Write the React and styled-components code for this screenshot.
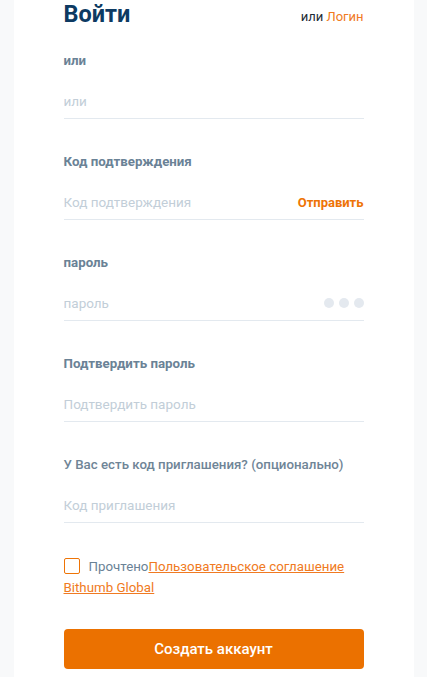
import React from "react";
import styled, { createGlobalStyle } from "styled-components";

const GlobalStyle = createGlobalStyle`
  html, body {
    margin: 0;
    padding: 0;
    background: #f8f9fa;
    font-family: Roboto, "Noto Sans", sans-serif;
  }
`;

const Page = styled.div`
  display: flex;
  justify-content: center;
  height: 677px;
  overflow: hidden;
`;

const Card = styled.div`
  width: 300px;
  padding: 0 50px 8px;
  background: #fff;
  display: flex;
  flex-direction: column;
`;

const Header = styled.div`
  display: flex;
  justify-content: space-between;
  align-items: flex-end;
  height: 28px;
`;

const Title = styled.h1`
  margin: 0;
  font-size: 23.5px;
  line-height: 28px;
  font-weight: 700;
  color: #0d3a62;
`;

const Switch = styled.div`
  font-size: 13px;
  line-height: 18px;
  color: #1d2b36;
  margin-bottom: 2px;
`;

const Orange = styled.span`
  color: #f07a22;
`;

const Field = styled.div`
  display: flex;
  flex-direction: column;
  margin-top: ${p => (p.first ? "23px" : "33px")};
`;

const Label = styled.div`
  font-size: 13.3px;
  line-height: 20px;
  font-weight: ${p => (p.light ? 500 : 700)};
  color: ${p => (p.light ? "#6f8597" : "#6a8296")};
`;

const InputRow = styled.div`
  display: flex;
  align-items: center;
  justify-content: space-between;
  padding: 20px 0 7px;
  border-bottom: 1px solid #e3e9ef;
`;

const Input = styled.input`
  flex: 1;
  min-width: 0;
  border: none;
  outline: none;
  padding: 0;
  height: 20px;
  font-family: inherit;
  font-size: 13.5px;
  color: #333;
  background: transparent;
  &::placeholder {
    color: #c2ced8;
  }
`;

const SendButton = styled.span`
  font-size: 13px;
  font-weight: 700;
  color: #ee7406;
`;

const Dots = styled.div`
  display: flex;
  gap: 5px;
`;

const Dot = styled.span`
  width: 10px;
  height: 10px;
  border-radius: 50%;
  background: #e4e9ef;
`;

const Agreement = styled.p`
  margin: 33px 0 0;
  font-size: 13.3px;
  line-height: 21px;
  color: #6a8296;
`;

const Box = styled.span`
  display: inline-block;
  box-sizing: border-box;
  width: 16px;
  height: 16px;
  border: 1.5px solid #ee7406;
  border-radius: 2px;
  vertical-align: -3px;
  margin-right: 9px;
`;

const Link = styled.a`
  color: #f07a22;
  text-decoration: underline;
`;

const Submit = styled.button`
  margin-top: 31px;
  height: 40px;
  border: none;
  border-radius: 4px;
  background: #eb7100;
  color: #fff;
  font-family: inherit;
  font-size: 15px;
  font-weight: 500;
`;

const fields = [
  { label: "или", placeholder: "или" },
  { label: "Код подтверждения", placeholder: "Код подтверждения", send: true },
  { label: "пароль", placeholder: "пароль", dots: true },
  { label: "Подтвердить пароль", placeholder: "Подтвердить пароль" },
  { label: "У Вас есть код приглашения? (опционально)", placeholder: "Код приглашения", light: true }
];

export default function App() {
  return (
    <Page>
      <GlobalStyle />
      <Card>
        <Header>
          <Title>Войти</Title>
          <Switch>или <Orange>Логин</Orange></Switch>
        </Header>
        {fields.map((f, i) => (
          <Field key={i} first={i === 0}>
            <Label light={f.light}>{f.label}</Label>
            <InputRow>
              <Input placeholder={f.placeholder} />
              {f.send && <SendButton>Отправить</SendButton>}
              {f.dots && (
                <Dots>
                  <Dot /><Dot /><Dot />
                </Dots>
              )}
            </InputRow>
          </Field>
        ))}
        <Agreement>
          <Box />Прочтено<Link>Пользовательское соглашение Bithumb Global</Link>
        </Agreement>
        <Submit>Создать аккаунт</Submit>
      </Card>
    </Page>
  );
}
